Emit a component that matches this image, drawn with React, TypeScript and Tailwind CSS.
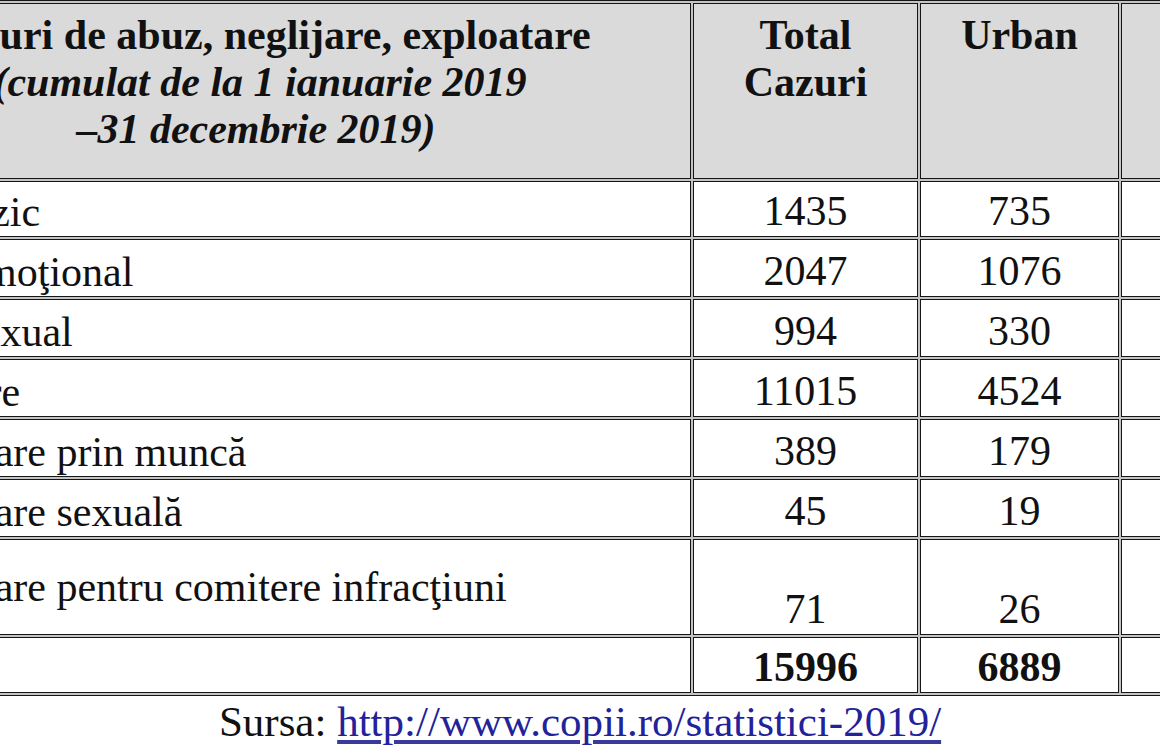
import React from "react";

const rows: { label: string; total: string; urban: string; rural: string; tall?: boolean; bold?: boolean }[] = [
  { label: "Abuz fizic", total: "1435", urban: "735", rural: "700" },
  { label: "Abuz emoţional", total: "2047", urban: "1076", rural: "971" },
  { label: "Abuz sexual", total: "994", urban: "330", rural: "664" },
  { label: "Neglijare", total: "11015", urban: "4524", rural: "6491" },
  { label: "Exploatare prin muncă", total: "389", urban: "179", rural: "210" },
  { label: "Exploatare sexuală", total: "45", urban: "19", rural: "26" },
  { label: "Exploatare pentru comitere infracţiuni", total: "71", urban: "26", rural: "45", tall: true },
  { label: "Total", total: "15996", urban: "6889", rural: "9107", bold: true },
];

export default function App() {
  return (
    <div className="w-[1160px] h-[750px] overflow-hidden bg-white font-['Liberation_Serif','Times_New_Roman',serif] text-[#111]">
      <div className="ml-[-182px] w-fit border border-[#151515] bg-[#c4c4c4] p-[2px] grid grid-cols-[870px_225px_199px_200px] grid-rows-[176px_56px_58px_58px_58px_58px_58px_96px_56px] gap-[2px] text-[42px]">
        <div className="bg-[#dadada] border border-[#151515] flex flex-col items-center pt-[8px] leading-[47px] font-bold whitespace-nowrap">
          <div className="pl-[16px]">Tipuri de abuz, neglijare, exploatare</div>
          <div className="italic pl-[8px]">(cumulat de la 1 ianuarie 2019</div>
          <div className="italic">–31 decembrie 2019)</div>
        </div>
        <div className="bg-[#dadada] border border-[#151515] flex flex-col items-center pt-[8px] leading-[47px] font-bold">
          <div>Total</div>
          <div>Cazuri</div>
        </div>
        <div className="bg-[#dadada] border border-[#151515] flex flex-col items-center pt-[8px] leading-[47px] font-bold">
          <div>Urban</div>
        </div>
        <div className="bg-[#dadada] border border-[#151515] flex flex-col items-center pt-[8px] leading-[47px] font-bold">
          <div>Rural</div>
        </div>
        {rows.map((r) => (
          <React.Fragment key={r.label}>
            <div
              className={`bg-white border border-[#151515] flex ${r.tall ? "items-center" : "items-end"} pl-[42px] leading-[48px] whitespace-nowrap ${r.bold ? "font-bold" : ""}`}
            >
              {r.label}
            </div>
            <div className={`bg-white border border-[#151515] flex items-end justify-center pb-[1px] leading-[48px] ${r.bold ? "font-bold" : ""}`}>
              {r.total}
            </div>
            <div className={`bg-white border border-[#151515] flex items-end justify-center pb-[1px] leading-[48px] ${r.bold ? "font-bold" : ""}`}>
              {r.urban}
            </div>
            <div className={`bg-white border border-[#151515] flex items-end justify-center pb-[1px] leading-[48px] ${r.bold ? "font-bold" : ""}`}>
              {r.rural}
            </div>
          </React.Fragment>
        ))}
      </div>
      <p className="mt-[2px] text-center text-[43px] leading-[48px]">
        Sursa:{" "}
        <a className="text-[#22229a] underline decoration-[#3a3a9a] underline-offset-[4px]">
          http://www.copii.ro/statistici-2019/
        </a>
      </p>
    </div>
  );
}
